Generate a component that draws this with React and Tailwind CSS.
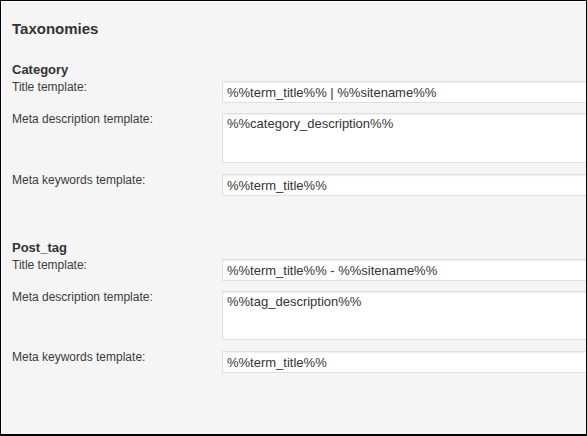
import React from "react";

const font = { fontFamily: '"Liberation Sans", Arial, sans-serif' };

function Field({ label, value, tall, height, gap }) {
  return (
    <div className={`flex items-start ${gap}`}>
      <div className="w-[210px] shrink-0 text-[12px] leading-[13px] text-[#3c3c3c]">{label}</div>
      {tall ? (
        <textarea
          readOnly
          value={value}
          className={`${height} w-[380px] shrink-0 resize-none border border-[#dfdfdf] bg-white px-[4px] pt-[2px] text-[13px] leading-[16px] text-[#333] shadow-[inset_0_1px_2px_rgba(0,0,0,0.07)] outline-none`}
        />
      ) : (
        <input
          readOnly
          value={value}
          className="h-[22px] w-[380px] shrink-0 border border-[#dfdfdf] bg-white px-[4px] text-[13px] text-[#333] shadow-[inset_0_1px_2px_rgba(0,0,0,0.07)] outline-none"
        />
      )}
    </div>
  );
}

function Section({ title, rows, top }) {
  return (
    <div className={top}>
      <h3 className="text-[13px] font-bold leading-[16px] text-[#333]">{title}</h3>
      <div className="mt-[3px]">
        <Field label="Title template:" value={rows[0]} gap="" />
        <Field label="Meta description template:" value={rows[1]} tall height={rows[3]} gap="mt-[10px]" />
        <Field label="Meta keywords template:" value={rows[2]} gap="mt-[11px]" />
      </div>
    </div>
  );
}

export default function App() {
  return (
    <div style={font} className="h-[436px] w-[587px] overflow-hidden border-x border-t border-b-2 border-black bg-[#f5f5f5]">
      <div className="h-full border-l border-t border-white pl-[10px] pt-[18px]">
        <h2 className="text-[15px] font-bold leading-[18px] text-[#333]">Taxonomies</h2>
        <Section
          title="Category"
          top="mt-[24px]"
          rows={["%%term_title%% | %%sitename%%", "%%category_description%%", "%%term_title%%", "h-[50px]"]}
        />
        <Section
          title="Post_tag"
          top="mt-[44px]"
          rows={["%%term_title%% - %%sitename%%", "%%tag_description%%", "%%term_title%%", "h-[49px]"]}
        />
      </div>
    </div>
  );
}
